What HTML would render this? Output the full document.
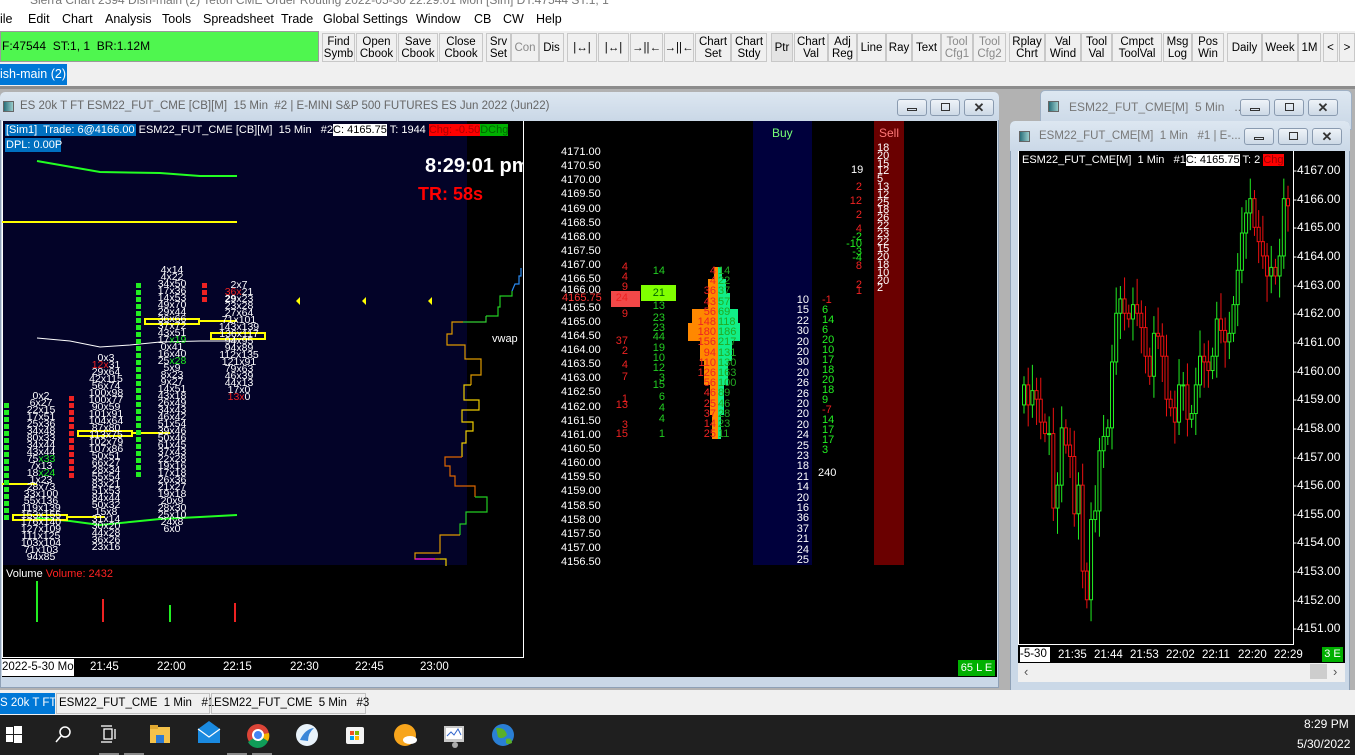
<!DOCTYPE html>
<html><head><meta charset="utf-8">
<style>
*{margin:0;padding:0;box-sizing:border-box}
body{width:1355px;height:755px;overflow:hidden;position:relative;background:#a8a8a8;font-family:"Liberation Sans",sans-serif;font-size:12px}
.a{position:absolute}
.menu span{position:absolute;top:11px;font-size:12.5px;color:#000}
.btn{position:absolute;top:33px;height:29px;border:1px solid #c8c8c8;background:#f0f0f0;font-size:11.5px;line-height:12px;text-align:center;color:#000;display:flex;align-items:center;justify-content:center;white-space:nowrap}
.btn.g{color:#8a8a8a}
.wt{position:absolute;background:linear-gradient(#dde7f1,#c9d7e6);border:1px solid #9fb0c4;border-radius:5px 5px 0 0}
.wb{position:absolute;width:30px;height:17px;border:1px solid #8a9bb0;border-radius:3px;background:linear-gradient(#eef3f8,#cdd9e6)}
.fp{position:absolute;font-family:"Liberation Sans Narrow","Liberation Sans",sans-serif;font-size:10.5px;line-height:7px;color:#fff;text-align:center;white-space:pre}
.sq{position:absolute;width:5px}
.n{position:absolute;font-size:11px;line-height:11px;white-space:nowrap}
.tl{position:absolute;top:649px;color:#fff;font-size:11.5px}
</style></head><body>
<div class="a" style="left:0;top:0;width:1355px;height:9px;background:#fff;overflow:hidden"><div class="a" style="left:30px;top:-7px;color:#777;font-size:12px;white-space:nowrap">Sierra Chart 2394 Dish-main (2)  Teton CME Order Routing 2022-05-30 22:29:01 Mon [Sim]  DT:47544  ST:1, 1</div></div>
<div class="a menu" style="left:0;top:9px;width:1355px;height:22px;background:#fff">
<span style="left:0;top:3px">ile</span><span style="left:28px;top:3px">Edit</span><span style="left:62px;top:3px">Chart</span><span style="left:105px;top:3px">Analysis</span><span style="left:162px;top:3px">Tools</span><span style="left:203px;top:3px">Spreadsheet</span><span style="left:281px;top:3px">Trade</span><span style="left:323px;top:3px">Global Settings</span><span style="left:416px;top:3px">Window</span><span style="left:474px;top:3px">CB</span><span style="left:503px;top:3px">CW</span><span style="left:536px;top:3px">Help</span>
</div>
<div class="a" style="left:0;top:31px;width:1355px;height:57px;background:#f0f0f0"></div>
<div class="a" style="left:0;top:31px;width:319px;height:31px;background:#4ff64f;border:1px solid #9a9a9a;font-size:12px;line-height:29px;padding-left:1px">F:47544&nbsp; ST:1, 1&nbsp; BR:1.12M</div>
<div class="btn" style="left:322px;width:33px">Find<br>Symb</div>
<div class="btn" style="left:356px;width:41px">Open<br>Cbook</div>
<div class="btn" style="left:398px;width:40px">Save<br>Cbook</div>
<div class="btn" style="left:439px;width:44px">Close<br>Cbook</div>
<div class="btn" style="left:486px;width:25px">Srv<br>Set</div>
<div class="btn g" style="left:511px;width:28px">Con</div>
<div class="btn" style="left:539px;width:25px">Dis</div>
<div class="btn" style="left:567px;width:30px">|↔|</div>
<div class="btn" style="left:598px;width:31px">|↔|</div>
<div class="btn" style="left:630px;width:33px">→||←</div>
<div class="btn" style="left:664px;width:30px">→||←</div>
<div class="btn" style="left:695px;width:36px">Chart<br>Set</div>
<div class="btn" style="left:731px;width:36px">Chart<br>Stdy</div>
<div class="btn" style="left:771px;width:22px;background:#e4e4e4">Ptr</div>
<div class="btn" style="left:794px;width:34px">Chart<br>Val</div>
<div class="btn" style="left:828px;width:29px">Adj<br>Reg</div>
<div class="btn" style="left:857px;width:29px">Line</div>
<div class="btn" style="left:886px;width:26px">Ray</div>
<div class="btn" style="left:912px;width:29px">Text</div>
<div class="btn g" style="left:941px;width:32px">Tool<br>Cfg1</div>
<div class="btn g" style="left:973px;width:33px">Tool<br>Cfg2</div>
<div class="btn" style="left:1009px;width:36px">Rplay<br>Chrt</div>
<div class="btn" style="left:1045px;width:36px">Val<br>Wind</div>
<div class="btn" style="left:1081px;width:31px">Tool<br>Val</div>
<div class="btn" style="left:1112px;width:50px">Cmpct<br>ToolVal</div>
<div class="btn" style="left:1163px;width:29px">Msg<br>Log</div>
<div class="btn" style="left:1192px;width:32px">Pos<br>Win</div>
<div class="btn" style="left:1227px;width:35px">Daily</div>
<div class="btn" style="left:1262px;width:36px">Week</div>
<div class="btn" style="left:1298px;width:23px">1M</div>
<div class="btn" style="left:1323px;width:15px">&lt;</div>
<div class="btn" style="left:1339px;width:16px">&gt;</div>
<div class="a" style="left:0;top:64px;width:67px;height:21px;background:#0078d7;color:#fff;font-size:12.5px;line-height:21px;white-space:nowrap">ish-main (2)</div>
<div class="a" style="left:0;top:86px;width:1355px;height:3px;background:#8c8c8c"></div>
<div class="a" style="left:0;top:89px;width:1355px;height:601px;background:#b2b2b2"></div>

<!-- window 1 -->
<div class="a" style="left:0;top:92px;width:999px;height:596px;background:#cad8e7;border:1px solid #8fa1b6;border-radius:5px 5px 0 0"></div>
<div class="a" style="left:0;top:92px;width:999px;height:28px;background:linear-gradient(#dde7f1,#cad8e7);border-radius:5px 5px 0 0"></div>
<div class="a" style="left:3px;top:101px;width:11px;height:11px;background:linear-gradient(90deg,#2a6f7a,#9cc);border:1px solid #666"></div>
<div class="a" style="left:20px;top:100px;color:#666;font-size:11.5px;white-space:nowrap">ES 20k T FT ESM22_FUT_CME [CB][M]&nbsp; 15 Min&nbsp; #2 | E-MINI S&amp;P 500 FUTURES ES Jun 2022 (Jun22)</div>
<div class="wb" style="left:897px;top:99px"><div class="a" style="left:9px;top:8px;width:10px;height:3px;border:1px solid #333"></div></div>
<div class="wb" style="left:930px;top:99px"><div class="a" style="left:10px;top:3px;width:9px;height:8px;border:1px solid #333"></div></div>
<div class="wb" style="left:964px;top:99px;color:#333;font-weight:bold;text-align:center;line-height:15px;font-size:13px">✕</div>
<div class="a" style="left:2px;top:121px;width:995px;height:556px;background:#000"></div>
<div class="a" style="left:2px;top:121px;width:465px;height:444px;background:#030328"></div>
<div class="a" style="left:2px;top:121px;width:522px;height:537px;border-right:1px solid #fff;border-bottom:1px solid #fff"></div>
<div class="a" style="left:2px;top:121px;width:1px;height:537px;background:#fff"></div>
<div class="a n" style="left:5px;top:123px;height:14px;line-height:14px;font-size:11px;color:#fff;width:518px;overflow:hidden">
<span style="background:#0070c0;padding:0 1px">[Sim1]&nbsp; Trade: 6@4166.00</span> ESM22_FUT_CME [CB][M]&nbsp; 15 Min&nbsp;&nbsp; #2<span style="background:#fff;color:#000">C: 4165.75</span> T: 1944 <span style="background:#f00;color:#a00">Chg: -0.50</span><span style="background:#00b000;color:#060">DChg</span></div>
<div class="a" style="left:5px;top:138px;width:56px;height:14px;background:#0070c0;color:#fff;font-size:11px;line-height:14px;padding-left:1px;white-space:nowrap">DPL: 0.00P</div>
<div class="a" style="left:425px;top:155px;color:#fff;font-weight:bold;font-size:20px;width:98px;overflow:hidden;white-space:nowrap">8:29:01 pm</div>
<div class="a" style="left:418px;top:184px;color:#f00;font-weight:bold;font-size:18px">TR: 58s</div>
<div class="a" style="left:492px;top:333px;color:#fff;font-size:11px">vwap</div>
<svg class="a" style="left:0;top:121px" width="525" height="445">
<polyline points="37,40 60,44 100,51 160,52 200,55 237,55" fill="none" stroke="#2f2" stroke-width="2"/>
<line x1="2" y1="101" x2="237" y2="101" stroke="#ff0" stroke-width="2"/>
<polyline points="37,217 70,220 100,226 130,224 160,221 200,220 237,220" fill="none" stroke="#fff" stroke-width="1"/>
<polyline points="37,397 70,400 100,404 130,401 160,398 200,396 237,394" fill="none" stroke="#2f2" stroke-width="2"/>
<g fill="none" stroke="#ff0" stroke-width="2">
<rect x="145" y="198" width="54" height="5"/><line x1="199" y1="200" x2="237" y2="200"/>
<rect x="211" y="212" width="54" height="6"/>
<rect x="78" y="310" width="54" height="5"/><line x1="132" y1="312" x2="170" y2="312"/>
<rect x="13" y="394" width="54" height="5"/><line x1="67" y1="396" x2="105" y2="396"/>
<line x1="2" y1="363" x2="37" y2="363"/>
</g>
<g fill="#ff0"><polygon points="296,180 300,176 300,184"/><polygon points="362,180 366,176 366,184"/><polygon points="428,180 432,176 432,184"/></g>
<g fill="none" stroke-width="1.2">
<polyline stroke="#2a8af0" points="521,147 521,155 519,155 519,163 515,163 512,170" />
<polyline stroke="#2c2" points="512,170 512,175 500,175 500,186 498,186 498,195 486,195" />
<polyline stroke="#3c3" points="486,195 486,201 463,201" />
<polyline stroke="#d90" points="463,201 452,201 452,213 447,213 447,224 465,224 465,238 481,238 481,254 471,254 471,264" />
<polyline stroke="#ec0" points="471,264 464,264 464,279 479,279 479,289 462,289 462,301 473,301 473,310 466,310 466,322 462,322 462,336" />
<polyline stroke="#d60" points="462,336 445,336 445,345 450,345 450,355 455,355 455,365 475,365 475,376" />
<polyline stroke="#2c2" points="475,376 487,376 487,391 466,391 466,403 460,403 460,414" />
<polyline stroke="#d90" points="460,414 440,414 440,432 415,432 415,438 440,438" />
<polyline stroke="#e0e" points="415,438 435,438"/>
<polyline stroke="#ec0" points="440,438 446,438 446,448" />
</g>
</svg>
<div class="sq" style="left:4px;top:403px;height:118px;background:repeating-linear-gradient(#2e2 0 5px,transparent 5px 7px)"></div>
<div class="sq" style="left:69px;top:396px;height:84px;background:repeating-linear-gradient(#e22 0 5px,transparent 5px 7px)"></div>
<div class="sq" style="left:136px;top:283px;height:196px;background:repeating-linear-gradient(#2e2 0 5px,transparent 5px 7px)"></div>
<div class="sq" style="left:202px;top:283px;height:19px;background:repeating-linear-gradient(#e22 0 5px,transparent 5px 7px)"></div>
<div class="fp" style="left:20px;top:393px;width:42px">0x2
6x27
22x15
17x51
25x36
34x48
80x33
34x44
43x44
75<span style="color:#2e2">x33</span>
7x13
18<span style="color:#2e2">x24</span>
1x23
28x73
33x100
55x136
119x139
153x155
176x140
127x109
111x125
103x104
71x103
94x85</div>
<div class="fp" style="left:84px;top:355px;width:44px">0x3
<span style="color:#e22">12x</span>31
29x64
42x115
56x74
100x98
100x77
90x59
101x91
104x64
87x80
113x75
102x79
107x86
50x51
66x27
28x34
55x54
83x21
51x53
84x44
50x32
15x8
31x14
30x20
44x28
36x26
23x16</div>
<div class="fp" style="left:151px;top:267px;width:42px">4x14
4x22
34x50
17x36
14x53
49x70
29x44
36x66
37x72
43x51
17<span style="color:#2e2">x19</span>
0x41
16x40
25<span style="color:#2e2">x28</span>
5x9
8x23
9x27
14x51
43x18
26x49
34x43
46x42
51x54
39x46
50x46
61x45
37x43
22x28
19x16
17x18
26x36
21x27
19x18
20x9
28x30
25x10
24x8
6x0</div>
<div class="fp" style="left:214px;top:282px;width:50px">2x7
<span style="color:#e22">36x</span>21
<b>29</b>x23
23x28
27x64
71x101
143x139
136x117
94x95
94x89
112x135
121x91
79x63
46x39
44x13
17x0
<span style="color:#e22">13x</span>0</div>
<div class="a" style="left:6px;top:568px;font-size:11px;color:#fff">Volume <span style="color:#f22">Volume: 2432</span></div>
<div class="a" style="left:36px;top:581px;width:2px;height:41px;background:#2e2"></div>
<div class="a" style="left:102px;top:599px;width:2px;height:23px;background:#e22"></div>
<div class="a" style="left:169px;top:605px;width:2px;height:17px;background:#2e2"></div>
<div class="a" style="left:234px;top:603px;width:2px;height:19px;background:#e22"></div>
<div class="a" style="left:2px;top:659px;width:72px;height:17px;background:#fff;color:#000;font-size:11.5px;line-height:17px;white-space:nowrap;overflow:hidden">2022-5-30 Mo</div>
<div class="a" style="left:90px;top:661px;color:#fff;font-size:11.5px">21:45</div>
<div class="a" style="left:157px;top:661px;color:#fff;font-size:11.5px">22:00</div>
<div class="a" style="left:223px;top:661px;color:#fff;font-size:11.5px">22:15</div>
<div class="a" style="left:290px;top:661px;color:#fff;font-size:11.5px">22:30</div>
<div class="a" style="left:355px;top:661px;color:#fff;font-size:11.5px">22:45</div>
<div class="a" style="left:420px;top:661px;color:#fff;font-size:11.5px">23:00</div>
<div class="a" style="left:958px;top:660px;width:37px;height:16px;background:#00b000;color:#fff;font-size:11px;line-height:16px;text-align:center">65 L E</div>
<div class="a" style="left:753px;top:121px;width:59px;height:444px;background:#00003c"></div>
<div class="a" style="left:772px;top:126px;color:#7f7;font-size:12px">Buy</div>
<div class="a" style="left:874px;top:121px;width:30px;height:444px;background:#6a0000"></div>
<div class="a" style="left:879px;top:126px;color:#f77;font-size:12px">Sell</div>
<svg class="a" style="left:680px;top:263px" width="70" height="180">
<g fill="#f80">
<rect x="34" y="4" width="4" height="12"/><rect x="28" y="16" width="10" height="30"/><rect x="12" y="46" width="26" height="14"/><rect x="8" y="60" width="30" height="18"/><rect x="20" y="78" width="18" height="20"/><rect x="24" y="98" width="14" height="24"/><rect x="30" y="122" width="8" height="30"/><rect x="32" y="152" width="6" height="24"/>
</g>
<g fill="#1e8">
<rect x="38" y="4" width="4" height="12"/><rect x="38" y="16" width="8" height="14"/><rect x="38" y="30" width="12" height="16"/><rect x="38" y="46" width="20" height="14"/><rect x="38" y="60" width="22" height="18"/><rect x="38" y="78" width="14" height="20"/><rect x="38" y="98" width="10" height="24"/><rect x="38" y="122" width="6" height="30"/><rect x="38" y="152" width="3" height="24"/>
</g>
</svg>
<div class="a" style="left:611px;top:291px;width:29px;height:16px;background:#f24848"></div>
<div class="a" style="left:641px;top:285px;width:35px;height:16px;background:#80ff00"></div>
<div id="dom"></div>

<!-- window 2 -->
<div class="wt" style="left:1040px;top:90px;width:312px;height:40px"></div>
<div class="a" style="left:1048px;top:101px;width:11px;height:11px;background:linear-gradient(90deg,#2a6f7a,#9cc);border:1px solid #666"></div>
<div class="a" style="left:1069px;top:100px;color:#777;font-size:12px;white-space:nowrap">ESM22_FUT_CME[M]&nbsp; 5 Min&nbsp;&nbsp; ...</div>
<div class="wb" style="left:1240px;top:99px"><div class="a" style="left:9px;top:8px;width:10px;height:3px;border:1px solid #333"></div></div>
<div class="wb" style="left:1274px;top:99px"><div class="a" style="left:10px;top:3px;width:9px;height:8px;border:1px solid #333"></div></div>
<div class="wb" style="left:1308px;top:99px;color:#333;font-weight:bold;text-align:center;line-height:15px;font-size:13px">✕</div>
<!-- window 3 -->
<div class="a" style="left:1010px;top:121px;width:340px;height:570px;background:#cad8e7;border:1px solid #8fa1b6;border-radius:5px 5px 0 0"></div>
<div class="a" style="left:1010px;top:121px;width:340px;height:30px;background:linear-gradient(#dde7f1,#cad8e7);border-radius:5px 5px 0 0"></div>
<div class="a" style="left:1019px;top:131px;width:11px;height:11px;background:linear-gradient(90deg,#2a6f7a,#9cc);border:1px solid #666"></div>
<div class="a" style="left:1039px;top:130px;color:#777;font-size:11.5px;white-space:nowrap">ESM22_FUT_CME[M]&nbsp; 1 Min&nbsp;&nbsp; #1 | E-...</div>
<div class="wb" style="left:1244px;top:128px"><div class="a" style="left:9px;top:8px;width:10px;height:3px;border:1px solid #333"></div></div>
<div class="wb" style="left:1278px;top:128px"><div class="a" style="left:10px;top:3px;width:9px;height:8px;border:1px solid #333"></div></div>
<div class="wb" style="left:1312px;top:128px;color:#333;font-weight:bold;text-align:center;line-height:15px;font-size:13px">✕</div>
<div class="a" style="left:1018px;top:151px;width:327px;height:512px;background:#000"></div>
<div class="a" style="left:1018px;top:151px;width:276px;height:494px;border-right:1px solid #fff;border-bottom:1px solid #fff;border-left:1px solid #fff"></div>
<svg id="cs" class="a" style="left:0;top:0" width="1355" height="755"></svg>
<div class="a n" style="left:1022px;top:153px;color:#fff;font-size:11px;line-height:14px;width:270px;overflow:hidden;background:#000">ESM22_FUT_CME[M]&nbsp; 1 Min&nbsp;&nbsp; #1<span style="background:#fff;color:#000">C: 4165.75</span> T: 2 <span style="background:#f00;color:#900">Chg</span></div>
<div id="ax"></div>
<div class="a" style="left:1020px;top:647px;width:30px;height:15px;background:#fff;font-size:11.5px;line-height:15px;color:#000">-5-30</div>
<div class="tl" style="left:1058px">21:35</div><div class="tl" style="left:1094px">21:44</div><div class="tl" style="left:1130px">21:53</div><div class="tl" style="left:1166px">22:02</div><div class="tl" style="left:1202px">22:11</div><div class="tl" style="left:1238px">22:20</div><div class="tl" style="left:1274px">22:29</div>
<div class="a" style="left:1322px;top:647px;width:21px;height:15px;background:#00b000;color:#fff;font-size:11px;line-height:15px;text-align:center">3 E</div>
<div class="a" style="left:1018px;top:663px;width:327px;height:19px;background:#f0f0f0;color:#555;font-size:13px"><span class="a" style="left:6px;top:1px">‹</span><span class="a" style="left:292px;top:1px;width:17px;height:15px;background:#cdcdcd"></span><span class="a" style="left:315px;top:1px">›</span></div>

<div class="a" style="left:0;top:690px;width:1355px;height:25px;background:#f0f0f0"></div>
<div class="a" style="left:0;top:693px;width:55px;height:21px;background:#0078d7;color:#fff;font-size:11.5px;line-height:21px;white-space:nowrap;overflow:hidden">S 20k T FT</div>
<div class="a" style="left:56px;top:693px;width:154px;height:21px;border:1px solid #c0c0c0;font-size:11.5px;line-height:19px;padding-left:2px;white-space:nowrap">ESM22_FUT_CME&nbsp; 1 Min&nbsp;&nbsp; #1</div>
<div class="a" style="left:211px;top:693px;width:155px;height:21px;border:1px solid #c0c0c0;font-size:11.5px;line-height:19px;padding-left:2px;white-space:nowrap">ESM22_FUT_CME&nbsp; 5 Min&nbsp;&nbsp; #3</div>
<div class="a" style="left:0;top:715px;width:1355px;height:40px;background:#1f1f1f"></div>
<svg class="a" style="left:0;top:715px" width="560" height="40">
<g fill="#fff"><rect x="6" y="12" width="7" height="7"/><rect x="14" y="11" width="8" height="8"/><rect x="6" y="20" width="7" height="7"/><rect x="14" y="20" width="8" height="8"/></g>
<circle cx="65" cy="17" r="5" fill="none" stroke="#fff" stroke-width="1.5"/><line x1="61" y1="21" x2="56" y2="27" stroke="#fff" stroke-width="1.5"/>
<g fill="none" stroke="#fff" stroke-width="1.3"><rect x="104" y="14" width="8" height="10"/><line x1="101" y1="11" x2="112" y2="11"/><line x1="101" y1="27" x2="112" y2="27"/><line x1="115" y1="14" x2="115" y2="24"/></g>
<rect x="150" y="12" width="20" height="16" fill="#f4c24a"/><rect x="150" y="10" width="8" height="4" fill="#e0a830"/><rect x="156" y="20" width="8" height="8" fill="#2c7bd5"/>
<polygon points="198,14 209,6 220,14 220,28 198,28" fill="#1a8ae0"/><polyline points="198,14 209,22 220,14" fill="none" stroke="#fff" stroke-width="1.2"/>
<circle cx="258" cy="20" r="11" fill="#db4437"/><path d="M258 20 L268 26 A11 11 0 0 1 248 27 Z" fill="#0f9d58"/><path d="M258 20 L268 26 A11 11 0 0 0 269 18 Z" fill="#f4b400"/><circle cx="258" cy="20" r="5" fill="#4285f4" stroke="#fff" stroke-width="2"/>
<circle cx="307" cy="20" r="11" fill="#e8f2fa"/><path d="M300 25 Q305 14 314 13 Q308 18 308 26" fill="#3a86d8"/>
<rect x="346" y="12" width="18" height="17" rx="2" fill="#f3f3f3"/><rect x="350" y="16" width="4" height="4" fill="#f25022"/><rect x="355" y="16" width="4" height="4" fill="#7fba00"/><rect x="350" y="21" width="4" height="4" fill="#00a4ef"/><rect x="355" y="21" width="4" height="4" fill="#ffb900"/>
<circle cx="405" cy="20" r="11" fill="#f7a51c"/><ellipse cx="410" cy="25" rx="7" ry="4" fill="#fff"/>
<rect x="444" y="11" width="20" height="16" fill="#c8c8c8"/><rect x="446" y="13" width="16" height="11" fill="#fff"/><polyline points="447,21 451,17 454,20 458,14 461,20" fill="none" stroke="#36c" stroke-width="1"/><circle cx="455" cy="30" r="3" fill="#aaa"/>
<circle cx="503" cy="20" r="11" fill="#2a7fd5"/><path d="M496 13 Q505 12 507 20 Q502 25 498 22 Z M506 24 Q512 22 512 28 Q508 30 506 28Z" fill="#5ab02a"/>
</svg>
<div class="a" style="left:1304px;top:717px;color:#fff;font-size:12px">8:29 PM</div>
<div class="a" style="left:1297px;top:737px;color:#fff;font-size:12px">5/30/2022</div>
<div class="a" style="left:99px;top:753px;width:20px;height:2px;background:#888"></div>
<div class="a" style="left:124px;top:753px;width:20px;height:2px;background:#888"></div>
<div class="a" style="left:227px;top:753px;width:20px;height:2px;background:#888"></div>
<div class="a" style="left:252px;top:753px;width:20px;height:2px;background:#888"></div>

<script>
(function(){
var h='';
function N(x,y,t,c,al){h+='<div class="n" style="'+(al=='r'?'right:'+(1355-x)+'px':'left:'+x+'px')+';top:'+(y-5)+'px;color:'+c+'">'+t+'</div>';}
for(var i=0;i<30;i++){var p=(4171-i*0.5).toFixed(2);var y=152+i*14.14;if(i==10)y+=-3;N(561,y,p,'#fff');}
N(562,298,'4165.75','#f33');
var reds=[[267,'4'],[277,'4'],[287,'9'],[298,'24'],[314,'9'],[341,'37'],[351,'2'],[365,'4'],[377,'7'],[399,'1'],[405,'13'],[425,'3'],[434,'15']];
reds.forEach(function(r){N(628,r[0],r[1],'#e22','r');});
var gr=[[271,'14'],[293,'21'],[306,'13'],[318,'23'],[328,'23'],[337,'44'],[348,'19'],[358,'10'],[368,'12'],[378,'3'],[385,'15'],[397,'6'],[408,'4'],[419,'4'],[434,'1']];
gr.forEach(function(r){N(665,r[0],r[1],r[1]=='21'?'#060':'#2c2','r');});
var pr=['4','4','36','43','56','148','180','156','94','110','126','56','46','25','37','14','25'];
pr.forEach(function(t,i){N(716,271+i*10.2,t,'#e22','r');});
var pg=['14','22','37','57','69','118','186','217','131','130','163','100','89','46','28','23','11'];
pg.forEach(function(t,i){N(718,271+i*10.2,t,'#2a2');});
var buy=['10','15','22','30','20','20','30','20','26','26','20','20','20','24','25','23','18','21','14','20','16','36','37','21','24','25'];
buy.forEach(function(t,i){N(809,300+i*10.4,t,'#fff','r');});
var bd=[['-1','#e22'],['6','#2e2'],['14','#2e2'],['6','#2e2'],['20','#2e2'],['10','#2e2'],['17','#2e2'],['18','#2e2'],['20','#2e2'],['18','#2e2'],['9','#2e2'],['-7','#e22'],['14','#2e2'],['17','#2e2'],['17','#2e2'],['3','#2e2']];
bd.forEach(function(t,i){N(822,300+i*10,t[0],t[1]);});
N(818,473,'240','#fff');
N(851,170,'19','#fff');
[[187,'2','#e22'],[201,'12','#e22'],[215,'2','#e22'],[229,'4','#e22'],[237,'-2','#2e2'],[244,'-10','#2e2'],[252,'-3','#2e2'],[258,'-4','#2e2'],[266,'8','#e22'],[285,'2','#e22'],[291,'1','#e22']].forEach(function(r){N(862,r[0],r[1],r[2],'r');});
var sl=['18','20','15','12','5','13','12','25','18','26','22','23','22','15','20','18','10','20','2'];
sl.forEach(function(t,i){N(877,148+i*7.8,t,'#fff');});
document.getElementById('dom').innerHTML=h;

var c=[4159.5,4158.8,4159.3,4159,4158.2,4157.8,4157.8,4155.2,4156,4158,4157.4,4157,4155,4156,4153,4152,4154.8,4155.1,4157.2,4157.7,4158,4160.3,4162,4162.5,4162,4161.8,4162.3,4162,4161.5,4160.5,4159.8,4161.3,4161.2,4160.5,4159,4158.7,4158.2,4159.5,4159.5,4158.3,4158.5,4159.5,4160.5,4160.3,4160,4160.5,4161.8,4161.4,4161,4161.3,4162.3,4163.5,4164.8,4165.5,4166,4165,4164.5,4164,4163.3,4163.6,4163.3,4164,4166,4165.75];
function Y(p){return 170+(4167-p)*28.65;}
var s='',n=c.length,o=4158.8;
for(var i=0;i<n;i++){var cl=c[i],x=1024+i*(264/(n-1));var up=cl>=o;var col=up?'#2e2':'#e11';
var hi=Math.min(4166.7,Math.max(o,cl)+0.3+((i*7)%5)*0.15),lo=Math.min(o,cl)-0.3-((i*3)%5)*0.15;
s+='<line x1="'+x+'" y1="'+Y(hi)+'" x2="'+x+'" y2="'+Y(lo)+'" stroke="'+col+'" stroke-width="1"/>';
var t=Y(Math.max(o,cl)),b=Y(Math.min(o,cl));if(b-t<1)b=t+1;
s+='<rect x="'+(x-1.5)+'" y="'+t+'" width="3" height="'+(b-t)+'" fill="#000" stroke="'+col+'" stroke-width="1"/>';o=cl;}
document.getElementById('cs').innerHTML=s;
var a='';for(var k=0;k<17;k++){var pp=4167-k,yy=Y(pp);a+='<div class="n" style="left:1293px;top:'+(yy-6)+'px;color:#fff;font-size:12px;line-height:12px">-'+pp.toFixed(2)+'</div>';}
document.getElementById('ax').innerHTML=a;
})();
</script>
</body></html>
